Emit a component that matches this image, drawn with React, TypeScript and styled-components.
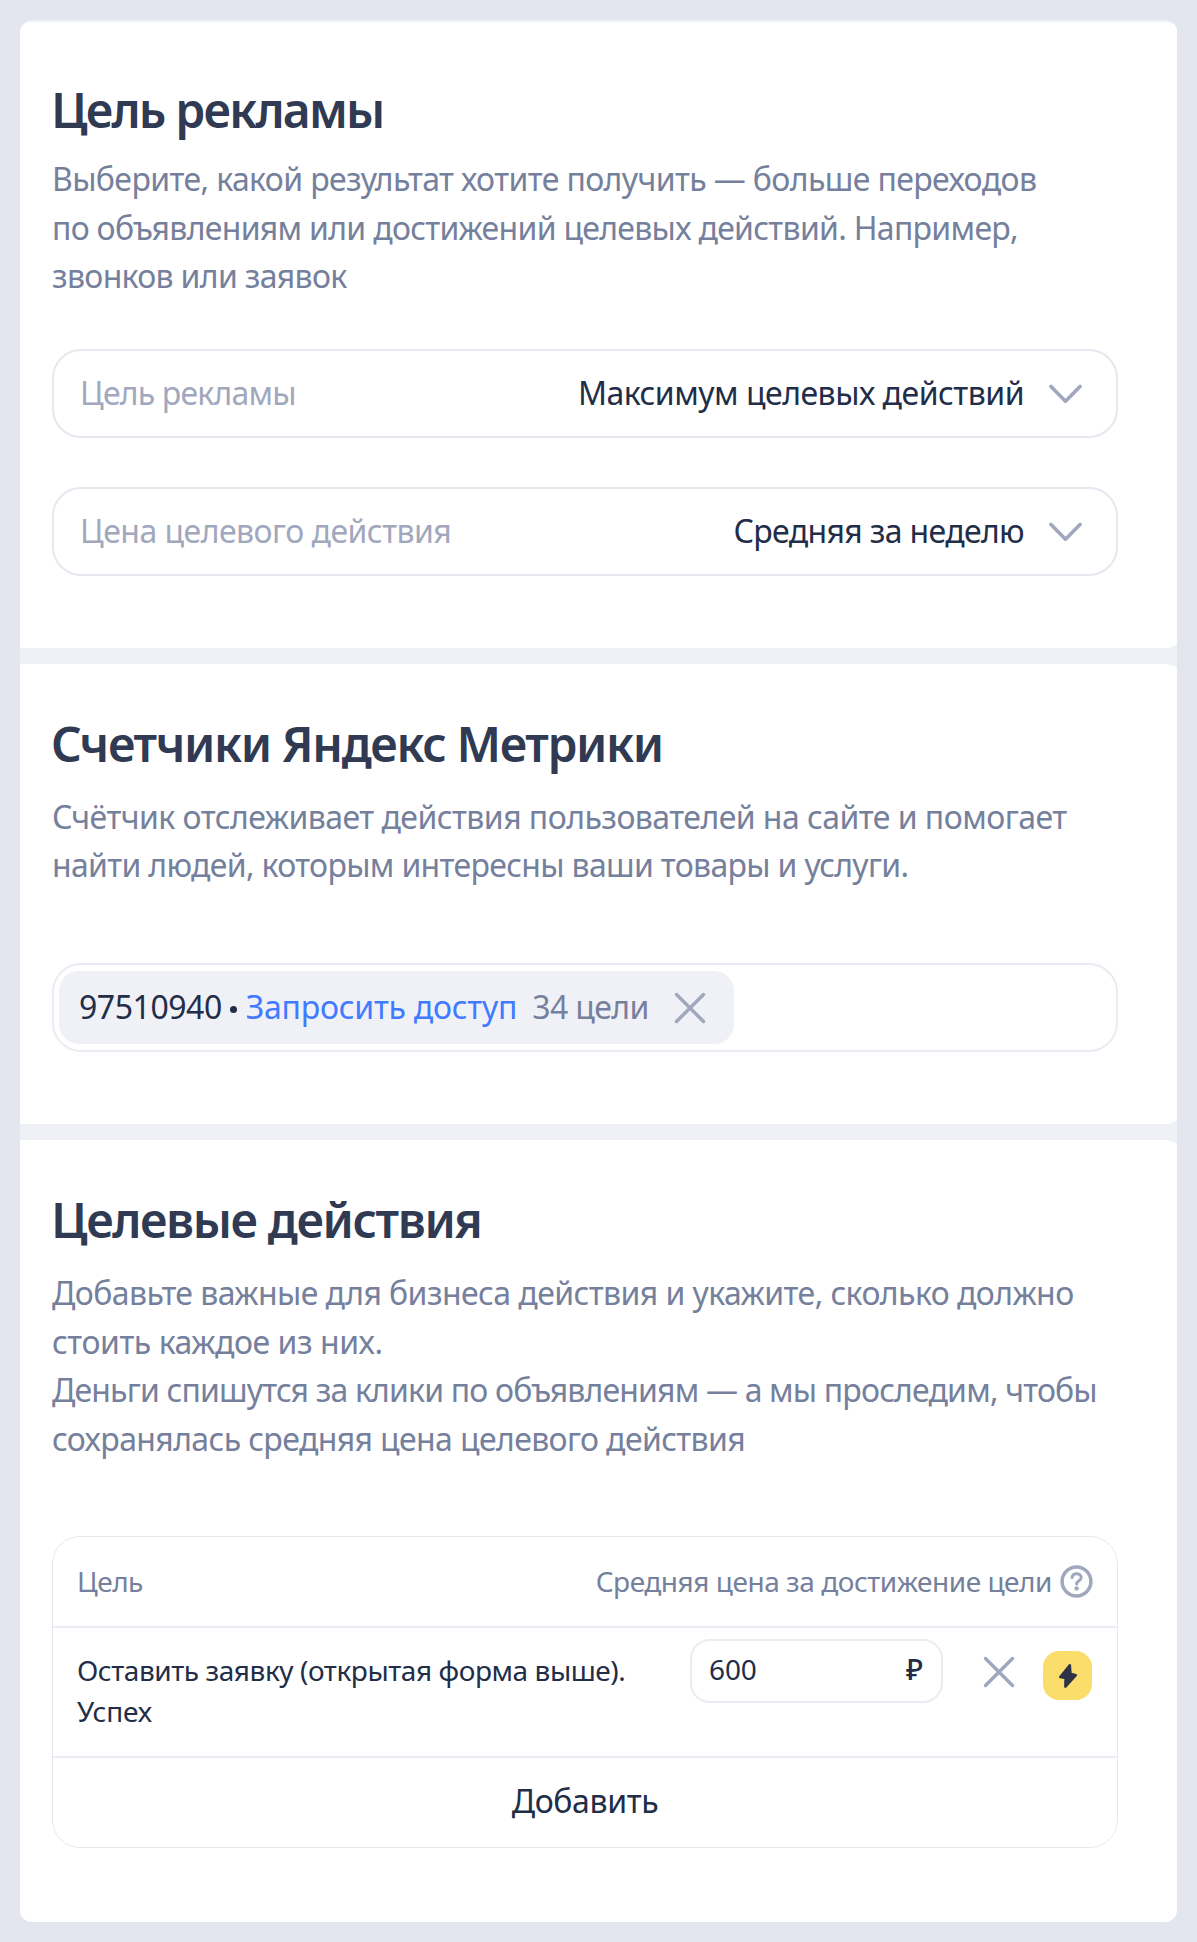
import React from "react";
import styled, { createGlobalStyle } from "styled-components";

const color = {
  page: "#e3e6ee",
  gutter: "#f0f1f7",
  heading: "#303a52",
  muted: "#75809c",
  placeholder: "#a1a8bd",
  icon: "#a1a8bd",
  text: "#222d47",
  link: "#407bff",
  line: "#e6e8f0",
  lineSoft: "#ebecf3",
};

const GlobalStyle = createGlobalStyle`
  * { box-sizing: border-box; }
  body {
    margin: 0;
    background: ${color.page};
    font-family: "Noto Sans", "Open Sans", sans-serif;
  }
`;

const Page = styled.div`
  height: 1942px;
  padding: 20px;
`;

const Panel = styled.main`
  display: flex;
  flex-direction: column;
  gap: 16px;
  height: 1902px;
  padding-top: 2px;
  background: ${color.gutter};
  border-radius: 12px;
  overflow: hidden;
`;

const Card = styled.section<{ $height: number; $top: number }>`
  flex: none;
  height: ${(p) => p.$height}px;
  margin-right: -8px;
  padding: ${(p) => p.$top}px 67px 0 32px;
  background: #fff;
  border-radius: 0 20px 20px 0;

  &:first-child {
    border-top-left-radius: 10px;
  }
`;

const Title = styled.h2`
  margin: 0 0 0 -1px;
  color: ${color.heading};
  font-size: 48px;
  font-weight: 600;
  line-height: 60px;
  white-space: nowrap;
`;

const Description = styled.p<{ $gap: number }>`
  margin: ${(p) => p.$gap}px 0 0;
  color: ${color.muted};
  font-size: 32px;
  line-height: 48.5px;
`;

const Line = styled.span<{ $track: number }>`
  display: block;
  white-space: nowrap;
  letter-spacing: ${(p) => p.$track}px;
`;

const Text = styled.span<{ $color: string; $track: number; $size?: number; $lift?: number }>`
  color: ${(p) => p.$color};
  font-size: ${(p) => p.$size ?? 32}px;
  letter-spacing: ${(p) => p.$track}px;
  line-height: 40px;
  white-space: nowrap;
  padding-bottom: ${(p) => p.$lift ?? 2}px;
`;

const Field = styled.div<{ $gap: number }>`
  display: flex;
  align-items: center;
  justify-content: space-between;
  width: 1066px;
  height: 89px;
  margin-top: ${(p) => p.$gap}px;
  padding: 0 34px 0 26px;
  border: 2px solid ${color.line};
  border-radius: 29px;
`;

const FieldValue = styled.div`
  display: flex;
  align-items: center;
  gap: 25px;
`;

const TagField = styled(Field)`
  justify-content: flex-start;
  padding: 0 5px;
  border-color: ${color.lineSoft};
`;

const Tag = styled.div`
  display: flex;
  align-items: center;
  width: 675px;
  height: 73px;
  padding: 0 28px 0 20px;
  background: ${color.gutter};
  border-radius: 20px;

  svg {
    margin-left: auto;
  }
`;

const Dot = styled.i`
  width: 7px;
  height: 7px;
  margin: 3px 9px 0 8px;
  border-radius: 50%;
  background: ${color.text};
`;

const Link = styled(Text)`
  margin-right: 15px;
`;

const Table = styled.div`
  width: 1066px;
  height: 312px;
  margin-top: 73px;
  border: 1.5px solid ${color.line};
  border-radius: 28px;
`;

const HeadRow = styled.div`
  display: flex;
  align-items: center;
  justify-content: space-between;
  height: 91px;
  padding: 0 24px;
  border-bottom: 2px solid ${color.lineSoft};
`;

const HeadHint = styled.div`
  display: flex;
  align-items: center;
  gap: 8px;
`;

const GoalRow = styled.div`
  display: flex;
  align-items: flex-start;
  height: 130px;
  padding: 11px 24px 0;
  border-bottom: 2px solid ${color.lineSoft};
`;

const GoalName = styled.div`
  display: flex;
  flex-direction: column;
  width: 613px;
  padding-top: 11px;
`;

const PriceBox = styled.div`
  display: flex;
  align-items: center;
  justify-content: space-between;
  width: 253px;
  height: 64px;
  padding: 0 18px 0 17px;
  border: 2px solid ${color.lineSoft};
  border-radius: 20px;
`;

const Currency = styled(Text)`
  font-weight: 500;
`;

const RemoveButton = styled.span`
  display: flex;
  margin: 17px 28px 0 40px;
`;

const BoostBadge = styled.span`
  display: grid;
  place-items: center;
  width: 49px;
  height: 49px;
  margin-top: 12px;
  background: #fbdd6c;
  border-radius: 16px;
`;

const AddRow = styled.div`
  display: grid;
  place-items: center;
  height: 88px;
`;

const Chevron = () => (
  <svg width="33" height="20" viewBox="0 0 33 20" fill="none" stroke={color.icon} strokeWidth="3.6" strokeLinecap="round" strokeLinejoin="round">
    <path d="M2 2.400 16.500 17.200 31 2.400" />
  </svg>
);

const Cross = () => (
  <svg width="32" height="32" viewBox="0 0 32 32" fill="none" stroke={color.icon} strokeWidth="3.500" strokeLinecap="round">
    <path d="M2.500 2.500 29.500 29.500M29.500 2.500 2.500 29.500" />
  </svg>
);

const Help = () => (
  <svg width="33" height="33" viewBox="0 0 33 33" fill="none" stroke={color.icon} strokeLinecap="round" strokeLinejoin="round">
    <circle cx="16.500" cy="16.500" r="14.400" strokeWidth="3.500" />
    <path d="M12 12.400C12.400 10 14.200 8.800 16.600 8.800c2.700 0 4.600 1.500 4.600 3.700 0 3.300-4.500 3.300-4.500 6.400" strokeWidth="3" />
    <circle cx="16.600" cy="23.400" r="2.200" fill={color.icon} stroke="none" />
  </svg>
);

const Bolt = () => (
  <svg width="20" height="26" viewBox="0 0 20 26" fill="#2d3448" stroke="#2d3448" strokeWidth="2.600" strokeLinejoin="round">
    <path d="M11.800 2.300 2.300 14 7.600 15 7.400 23.600 17.800 12.200 12.400 10.800Z" />
  </svg>
);

export default function App() {
  return (
    <>
      <GlobalStyle />
      <Page>
        <Panel>
          <Card $height={626} $top={57.5}>
            <Title><Line $track={-1.8}>Цель рекламы</Line></Title>
            <Description $gap={15.5}>
              <Line $track={-0.61}>Выберите, какой результат хотите получить — больше переходов</Line>
              <Line $track={-0.7}>по объявлениям или достижений целевых действий. Например,</Line>
              <Line $track={-0.68}>звонков или заявок</Line>
            </Description>
            <Field $gap={48.5}>
              <Text $color={color.placeholder} $track={-0.8}>Цель рекламы</Text>
              <FieldValue>
                <Text $color={color.text} $track={-0.5}>Максимум целевых действий</Text>
                <Chevron />
              </FieldValue>
            </Field>
            <Field $gap={49}>
              <Text $color={color.placeholder} $track={-0.52}>Цена целевого действия</Text>
              <FieldValue>
                <Text $color={color.text} $track={-0.65}>Средняя за неделю</Text>
                <Chevron />
              </FieldValue>
            </Field>
          </Card>

          <Card $height={460} $top={49.5}>
            <Title><Line $track={-1.37}>Счетчики Яндекс Метрики</Line></Title>
            <Description $gap={19}>
              <Line $track={-0.54}>Счётчик отслеживает действия пользователей на сайте и помогает</Line>
              <Line $track={-0.67}>найти людей, которым интересны ваши товары и услуги.</Line>
            </Description>
            <TagField $gap={73.5}>
              <Tag>
                <Text $color={color.text} $track={-0.45}>97510940</Text>
                <Dot />
                <Link $color={color.link} $track={-0.24}>Запросить доступ</Link>
                <Text $color={color.muted} $track={-0.6}>34 цели</Text>
                <Cross />
              </Tag>
            </TagField>
          </Card>

          <Card $height={782} $top={49.5}>
            <Title><Line $track={-1.4}>Целевые действия</Line></Title>
            <Description $gap={19.5}>
              <Line $track={-0.57}>Добавьте важные для бизнеса действия и укажите, сколько должно</Line>
              <Line $track={-0.46}>стоить каждое из них.</Line>
              <Line $track={-0.83}>Деньги спишутся за клики по объявлениям — а мы проследим, чтобы</Line>
              <Line $track={-0.62}>сохранялась средняя цена целевого действия</Line>
            </Description>
            <Table>
              <HeadRow>
                <Text $color={color.muted} $track={-0.5} $size={28}>Цель</Text>
                <HeadHint>
                  <Text $color={color.muted} $track={-0.46} $size={28}>Средняя цена за достижение цели</Text>
                  <Help />
                </HeadHint>
              </HeadRow>
              <GoalRow>
                <GoalName>
                  <Text $color={color.text} $track={-0.44} $size={28} $lift={0.5}>Оставить заявку (открытая форма выше).</Text>
                  <Text $color={color.text} $track={-0.1} $size={28} $lift={0}>Успех</Text>
                </GoalName>
                <PriceBox>
                  <Text $color={color.text} $track={-0.1} $size={28} $lift={4}>600</Text>
                  <Currency $color={color.text} $track={0} $size={29} $lift={4}>₽</Currency>
                </PriceBox>
                <RemoveButton><Cross /></RemoveButton>
                <BoostBadge><Bolt /></BoostBadge>
              </GoalRow>
              <AddRow>
                <Text $color={color.text} $track={-0.35}>Добавить</Text>
              </AddRow>
            </Table>
          </Card>
        </Panel>
      </Page>
    </>
  );
}
